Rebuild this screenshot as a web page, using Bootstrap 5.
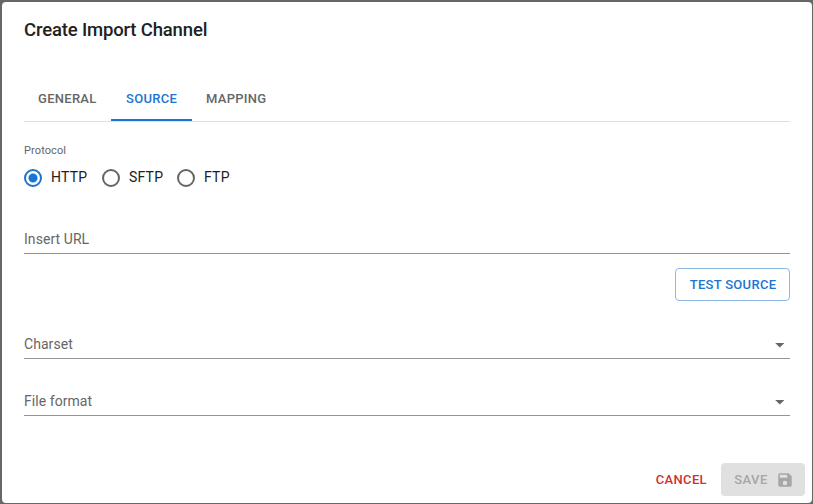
<!DOCTYPE html>
<html lang="en">
<head>
<meta charset="utf-8">
<meta name="viewport" content="width=device-width, initial-scale=1">
<title>Create Import Channel</title>
<link href="https://cdn.jsdelivr.net/npm/bootstrap@5.3.0/dist/css/bootstrap.min.css" rel="stylesheet">
<style>
body{font-family:Roboto,"Liberation Sans",sans-serif;background:#676767;color:#212121;height:504px;overflow:hidden;padding:2px 1px 1px 2px}
.dialog{height:501px;border-radius:4px;background:#fff}
.dialog-title{font-size:18.5px;font-weight:500;line-height:28px;padding:14px 22px 0;height:74px;letter-spacing:-.16px}
.dialog-content{padding:0 22px;height:381px}
.tabs{height:46px;border-bottom:1px solid #e0e0e0}
.tabs .nav-link{font-size:13px;font-weight:500;letter-spacing:.28px;line-height:20px;color:#666;padding:13px 14px 0;height:45px;width:87px;border-radius:0;white-space:nowrap}
.tabs .nav-link.active{width:81px;color:#1976d2;border-bottom:2px solid #1976d2;background:none;padding-left:15px}
.group-label{font-size:11px;line-height:14px;color:#666;margin-top:22px;letter-spacing:.1px}
.radios{height:26px;margin-top:7px}
.radios .form-check-label{font-size:14px;line-height:24px;padding-bottom:2px;letter-spacing:.2px;color:#212121}
.radios .form-check-input{width:18px;height:18px;border:2px solid #666;margin:0 9px 0 0;float:none;flex:none;box-shadow:none}
.radios .form-check:nth-child(1){width:78px}
.radios .form-check:nth-child(2){width:75px}
.radios .form-check-input:checked{border-color:#1976d2;background:radial-gradient(circle,#1976d2 4px,#fff 5px)}
.field{height:30px;border-bottom:1px solid #949494;font-size:14px;line-height:30px;color:#666;letter-spacing:.06px}
.field-url{margin-top:33px}
.field-charset{margin-top:28px}
.field-format{margin-top:27px}
.action{font-size:13px;font-weight:500;letter-spacing:.5px;line-height:20px;border-radius:4px;height:33px;padding:0 14px;border:0}
.action-test.btn{width:115px;color:#1976d2;border:1px solid #8cbae8;padding:0 0 0 1px;margin-top:14px;letter-spacing:.3px}
.action-cancel.btn{color:#d32f2f;letter-spacing:.35px}
.action-save.btn:disabled{width:84px;background:#e0e0e0;color:#a6a6a6;opacity:1;padding:0 0 0 2px;letter-spacing:.4px}
.dialog-actions{padding:6px 7px 7px}
</style>
<script src="https://cdn.jsdelivr.net/npm/bootstrap@5.3.0/dist/js/bootstrap.bundle.min.js"></script>
</head>
<body>
<main class="dialog d-flex flex-column">
  <h1 class="dialog-title m-0">Create Import Channel</h1>
  <div class="dialog-content">
    <nav class="nav tabs flex-nowrap">
      <a class="nav-link" href="#">GENERAL</a>
      <a class="nav-link active" href="#">SOURCE</a>
      <a class="nav-link" href="#">MAPPING</a>
    </nav>
    <div class="group-label">Protocol</div>
    <div class="radios d-flex">
      <div class="form-check d-flex align-items-center p-0 m-0"><input class="form-check-input" type="radio" name="protocol" id="http" checked><label class="form-check-label" for="http">HTTP</label></div>
      <div class="form-check d-flex align-items-center p-0 m-0"><input class="form-check-input" type="radio" name="protocol" id="sftp"><label class="form-check-label" for="sftp">SFTP</label></div>
      <div class="form-check d-flex align-items-center p-0 m-0"><input class="form-check-input" type="radio" name="protocol" id="ftp"><label class="form-check-label" for="ftp">FTP</label></div>
    </div>
    <div class="field field-url">Insert URL</div>
    <div class="d-flex justify-content-end"><button class="btn action action-test">TEST SOURCE</button></div>
    <div class="field field-charset d-flex justify-content-between">Charset<svg class="mt-2" width="20" height="18" viewBox="0 0 20 18"><path d="M5.200 6h9.200l-4.600 4.500z" fill="#666"/></svg></div>
    <div class="field field-format d-flex justify-content-between">File format<svg class="mt-2" width="20" height="18" viewBox="0 0 20 18"><path d="M5.200 6h9.200l-4.600 4.500z" fill="#666"/></svg></div>
  </div>
  <div class="dialog-actions d-flex justify-content-end">
    <button class="btn action action-cancel">CANCEL</button>
    <button class="btn action action-save d-flex align-items-center justify-content-center" disabled>SAVE<svg class="ms-2" width="18" height="18" viewBox="0 0 24 24"><path d="M17 3H5a2 2 0 0 0-2 2v14a2 2 0 0 0 2 2h14c1.100 0 2-.9 2-2V7l-4-4zm-5 16a3 3 0 1 1 0-6 3 3 0 0 1 0 6zm3-10H5V5h10v4z" fill="currentColor"/></svg></button>
  </div>
</main>
</body>
</html>
